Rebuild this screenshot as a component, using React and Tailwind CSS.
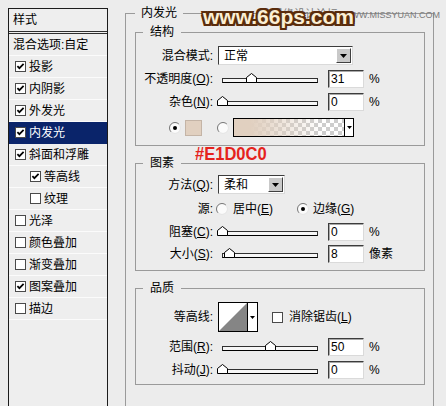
import React from "react";

const items = [
  { label: "投影", checked: true },
  { label: "内阴影", checked: true },
  { label: "外发光", checked: true },
  { label: "内发光", checked: true, active: true },
  { label: "斜面和浮雕", checked: true },
  { label: "等高线", checked: true, sub: true },
  { label: "纹理", checked: false, sub: true },
  { label: "光泽", checked: false },
  { label: "颜色叠加", checked: false },
  { label: "渐变叠加", checked: false },
  { label: "图案叠加", checked: true },
  { label: "描边", checked: false },
];

const CheckBox = ({ checked }) => (
  <svg width="11" height="11" viewBox="0 0 11 11" className="shrink-0">
    <rect x="0.5" y="0.5" width="10" height="10" fill="#fff" stroke="#4a4a4a" />
    {checked && <path d="M2.4 5.1 4.4 7.2 8.6 2.9" fill="none" stroke="#000" strokeWidth="1.7" />}
  </svg>
);

const Radio = ({ on }) => (
  <svg width="12" height="12" viewBox="0 0 12 12" className="shrink-0">
    <circle cx="6" cy="6" r="5" fill="#fbfbfb" />
    <path d="M2.1 9.9A5.5 5.5 0 0 1 9.9 2.1" fill="none" stroke="#777" />
    <path d="M9.9 2.1A5.5 5.5 0 0 1 2.1 9.9" fill="none" stroke="#e6e6e6" />
    {on && <circle cx="6" cy="6" r="2" fill="#000" />}
  </svg>
);

const Arrow = () => (
  <svg width="7" height="4" viewBox="0 0 7 4">
    <path d="M0 0H7L3.5 4Z" fill="#000" />
  </svg>
);

const Label = ({ children }) => <span className="w-[77px] shrink-0 text-right">{children}</span>;

const Slider = ({ thumb }) => (
  <div className="relative ml-[4px] h-[18px] w-[106px] shrink-0">
    <div className="mx-[5px] mt-[8px] h-[5px] border border-[#303030] border-b-black bg-[#f6f6f6]" />
    <svg width="11" height="10" viewBox="0 0 11 10" className={`absolute top-[3px] ${thumb}`}>
      <path d="M0.5 9.5V4.5L5.5 0.5L10.5 4.5V9.5Z" fill="#fff" stroke="#000" />
    </svg>
  </div>
);

const NumBox = ({ value }) => (
  <div className="ml-[5px] flex h-[18px] w-[36px] shrink-0 items-center border border-t-[#3c3c3c] border-l-[#3c3c3c] border-r-[#dadada] border-b-[#dadada] bg-white pl-[2px] shadow-[inset_1px_1px_0_#a8a8a8]">
    {value}
  </div>
);

const Select = ({ value, width }) => (
  <div className={`ml-[5px] flex h-[19px] shrink-0 items-center border border-t-[#3c3c3c] border-l-[#3c3c3c] border-r-[#dadada] border-b-[#dadada] bg-white ${width}`}>
    <span className="flex-1 pl-[5px]">{value}</span>
    <div className="mr-[1px] flex h-[15px] w-[15px] items-center justify-center border border-t-white border-l-white border-r-[#404040] border-b-[#404040] bg-[#c9c9c9]">
      <Arrow />
    </div>
  </div>
);

const Legend = ({ children, outer }) => (
  <legend className={outer ? "px-[6px] leading-[16px]" : "ml-[7px] px-[7px] leading-[16px]"}>{children}</legend>
);

export default function App() {
  return (
    <div className="relative flex h-[406px] w-[446px] overflow-hidden bg-[#ececec] text-[12px] leading-[14px] text-black font-['Liberation_Sans','Noto_Sans_CJK_SC',sans-serif]">
      {/* style list */}
      <div className="ml-[8px] mt-[8px] h-[420px] w-[100px] shrink-0 border border-[#1c1c1c] bg-[#eeeeee]">
        <div className="flex h-[22px] items-center pl-[4px]">样式</div>
        <div className="h-[3px] border-y border-[#2e2e2e]" />
        <div className="flex h-[22px] items-center border-b border-[#fbfbfb] pl-[4px]">混合选项:自定</div>
        {items.map((it) => (
          <div
            key={it.label}
            className={`flex h-[22px] items-center gap-[3px] border-b ${it.sub ? "pl-[21px]" : "pl-[6px]"} ${
              it.active ? "border-[#0a246a] bg-[#0a246a] text-white" : "border-[#fbfbfb]"
            }`}
          >
            <CheckBox checked={it.checked} />
            <span>{it.label}</span>
          </div>
        ))}
      </div>

      {/* inner glow settings */}
      <fieldset className="ml-[17px] mt-[5px] h-[420px] w-[309px] shrink-0 border border-[#9a9a9a] pl-[9px] pr-[8px] pt-[3px]">
        <Legend outer>内发光</Legend>

        <fieldset className="border border-[#9a9a9a] pb-[8px] pt-[6px]">
          <Legend>结构</Legend>
          <div className="flex h-[19px] items-center">
            <Label>混合模式:</Label>
            <Select value="正常" width="w-[135px]" />
          </div>
          <div className="mt-[5px] flex h-[18px] items-center">
            <Label>
              不透明度(<span className="underline">O</span>):
            </Label>
            <Slider thumb="left-[29px]" />
            <NumBox value="31" />
            <span className="ml-[5px]">%</span>
          </div>
          <div className="mt-[5px] flex h-[18px] items-center">
            <Label>
              杂色(<span className="underline">N</span>):
            </Label>
            <Slider thumb="left-[0px]" />
            <NumBox value="0" />
            <span className="ml-[5px]">%</span>
          </div>
          <div className="mt-[7px] flex h-[19px] items-center">
            <div className="ml-[33px]">
              <Radio on />
            </div>
            <div className="ml-[4px] h-[16px] w-[17px] border border-[#c4b4a6] bg-[#e1d0c0]" />
            <div className="ml-[15px]">
              <Radio />
            </div>
            <div className="ml-[4px] flex h-[19px] w-[121px] border border-black">
              <div className="flex-1 bg-[image:conic-gradient(#cdcdcd_25%,#ffffff_0_50%,#cdcdcd_0_75%,#ffffff_0)] bg-[length:8px_8px]">
                <div className="h-full w-full bg-linear-to-r from-[#e1d0c0] from-15% to-[#e1d0c0]/0 to-80%" />
              </div>
              <div className="flex w-[9px] items-center justify-center border-l border-black bg-white">
                <svg width="5" height="3" viewBox="0 0 5 3">
                  <path d="M0 0H5L2.5 3Z" fill="#000" />
                </svg>
              </div>
            </div>
          </div>
        </fieldset>

        <fieldset className="mt-[9px] border border-[#9a9a9a] pb-[7px] pt-[4px]">
          <Legend>图素</Legend>
          <div className="flex h-[19px] items-center">
            <Label>
              方法(<span className="underline">Q</span>):
            </Label>
            <Select value="柔和" width="w-[67px]" />
          </div>
          <div className="mt-[7px] flex h-[16px] items-center">
            <Label>源:</Label>
            <div className="ml-[3px]">
              <Radio />
            </div>
            <span className="ml-[5px]">
              居中(<span className="underline">E</span>)
            </span>
            <div className="ml-[24px]">
              <Radio on />
            </div>
            <span className="ml-[4px]">
              边缘(<span className="underline">G</span>)
            </span>
          </div>
          <div className="mt-[6px] flex h-[18px] items-center">
            <Label>
              阻塞(<span className="underline">C</span>):
            </Label>
            <Slider thumb="left-[0px]" />
            <NumBox value="0" />
            <span className="ml-[5px]">%</span>
          </div>
          <div className="mt-[4px] flex h-[18px] items-center">
            <Label>
              大小(<span className="underline">S</span>):
            </Label>
            <Slider thumb="left-[7px]" />
            <NumBox value="8" />
            <span className="ml-[5px]">像素</span>
          </div>
        </fieldset>

        <fieldset className="mt-[9px] border border-[#9a9a9a] pb-[5px] pt-[6px]">
          <Legend>品质</Legend>
          <div className="flex h-[30px] items-center">
            <Label>等高线:</Label>
            <div className="ml-[5px] flex h-[30px] w-[40px] border border-black bg-white">
              <svg width="28" height="28" viewBox="0 0 28 28" className="shrink-0">
                <path d="M0 28L28 0V28Z" fill="#858585" />
              </svg>
              <div className="flex flex-1 items-center justify-center border-l border-black">
                <svg width="5" height="3" viewBox="0 0 5 3">
                  <path d="M0 0H5L2.5 3Z" fill="#000" />
                </svg>
              </div>
            </div>
            <div className="ml-[14px]">
              <CheckBox checked={false} />
            </div>
            <span className="ml-[6px]">
              消除锯齿(<span className="underline">L</span>)
            </span>
          </div>
          <div className="mt-[6px] flex h-[18px] items-center">
            <Label>
              范围(<span className="underline">R</span>):
            </Label>
            <Slider thumb="left-[48px]" />
            <NumBox value="50" />
            <span className="ml-[5px]">%</span>
          </div>
          <div className="mt-[5px] flex h-[18px] items-center">
            <Label>
              抖动(<span className="underline">J</span>):
            </Label>
            <Slider thumb="left-[0px]" />
            <NumBox value="0" />
            <span className="ml-[5px]">%</span>
          </div>
        </fieldset>
      </fieldset>

      {/* annotation and watermarks over the dialog */}
      <div className="absolute left-[195px] top-[144px] origin-left scale-x-[0.87] text-[19px] font-bold leading-[19px] text-[#e5231d]">
        #E1D0C0
      </div>
      <div className="absolute left-[272px] top-[8px] flex items-baseline gap-[4px] text-[#7a7a7a]">
        <span className="text-[11px] leading-[12px]">思缘设计论坛</span>
        <span className="text-[9px] leading-[12px]">WWW.MISSYUAN.COM</span>
      </div>
      <div className="absolute left-[203px] top-[6px] text-[21px] font-bold leading-[21px] text-[#fbefd4] [text-shadow:2px_0_#5a2c0c,-2px_0_#5a2c0c,0_2px_#5a2c0c,0_-2px_#5a2c0c,2px_2px_#5a2c0c,-2px_-2px_#5a2c0c,2px_-2px_#5a2c0c,-2px_2px_#5a2c0c,1px_0_#5a2c0c,-1px_0_#5a2c0c]">
        www.66ps.com
      </div>
    </div>
  );
}
